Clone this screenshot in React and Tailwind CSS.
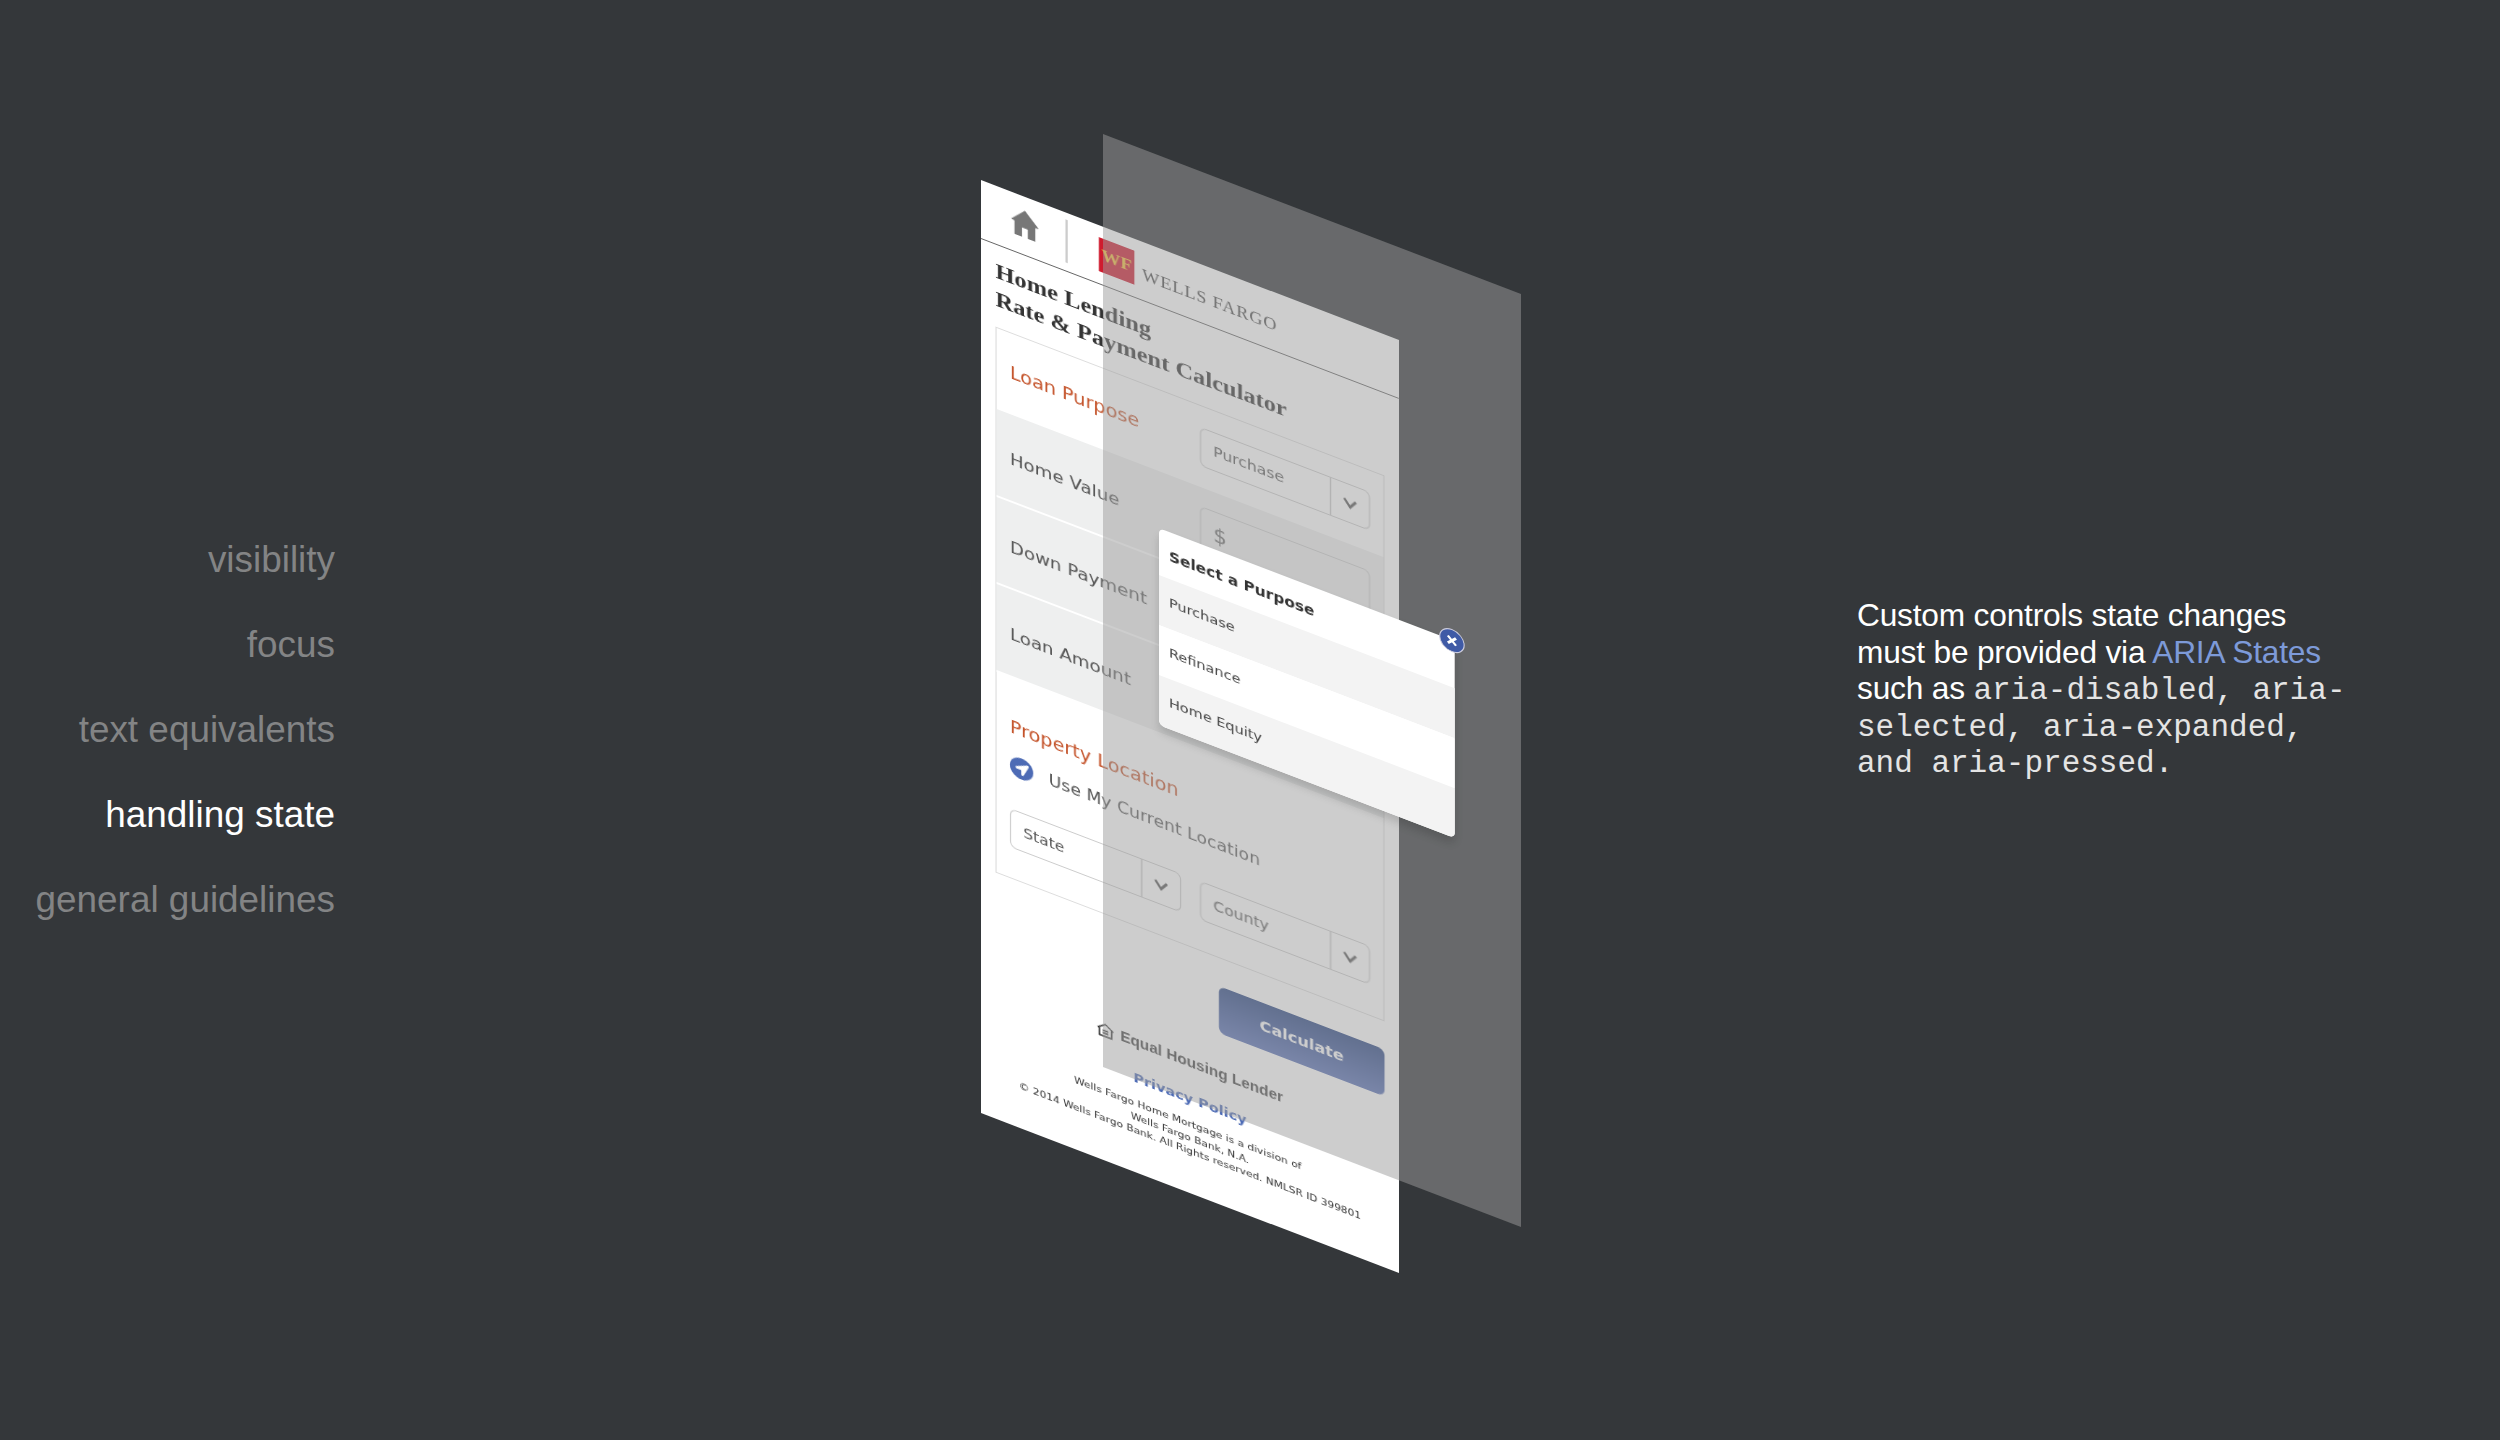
import React from "react";
import { FaLocationArrow } from "react-icons/fa";

const navItems = [
  { label: "visibility" },
  { label: "focus" },
  { label: "text equivalents" },
  { label: "handling state", active: true },
  { label: "general guidelines" },
];

function Chevron() {
  return (
    <svg viewBox="0 0 16 12" className="h-[11px] w-[14px]" fill="none" stroke="#555" strokeWidth="2.6">
      <path d="M2 2l6 8 6-8" />
    </svg>
  );
}

function Select({ label, className }) {
  return (
    <div className={`flex h-[39px] items-stretch rounded-md border border-[#ccc] bg-white ${className}`}>
      <div className="flex-1 pl-[11px] pt-[8px] text-[14px] leading-[20px] text-[#555]">{label}</div>
      <div className="flex w-[35px] items-center justify-center border-l border-[#bbb]">
        <Chevron />
      </div>
    </div>
  );
}

function Row({ label, prefix }) {
  return (
    <div className="flex h-[87.5px] items-start justify-between border-b-2 border-white bg-[#eeefef] pl-[12px] pr-[12px]">
      <div className="pt-[33px] text-[16.4px] leading-[24px] text-[#555]">{label}</div>
      <div className="mt-[19px] h-[46px] w-[153px] rounded-md border border-[#ccc] bg-[#eeefef] pl-[11px] pt-[10px] text-[19px] leading-[24px] text-[#666]">
        {prefix}
      </div>
    </div>
  );
}

function HomeIcon() {
  return (
    <svg viewBox="0 0 24 26" className="h-[29px] w-[25px]" fill="#777">
      <path d="M12 0L24 12.5 21 13V26H14.5V17H9.5V26H3V13L0 12.5Z" />
    </svg>
  );
}

function HousingIcon() {
  return (
    <svg viewBox="0 0 16 14" className="mr-[5px] h-[14px] w-[16px] shrink-0" fill="none" stroke="#333" strokeWidth="1.4">
      <path d="M1 6l7-5 7 5M2.5 5.5V13h11V5.5M5.5 7.5h5M5.5 10h5" />
    </svg>
  );
}

function PhoneScreen() {
  return (
    <div className="absolute left-[21px] top-[180px] h-[933px] w-[376px] origin-top-left bg-white [font-family:'DejaVu_Sans',sans-serif] [transform:matrix(1.1117,0.4255,0,1,0,0)]">
      <div className="flex h-full flex-col blur-[0.5px]">
        <div className="flex h-[59px] shrink-0 items-start border-b-[1.5px] border-[#666]">
          <div className="flex h-[57px] w-[76px] justify-center pl-[2px] pt-[13px]">
            <HomeIcon />
          </div>
          <div className="mt-[7px] h-[43px] w-[2px] bg-[#ccc]" />
          <div className="ml-[28px] mt-[12px] flex h-[34px] w-[32px] items-center justify-center bg-[#cf1b2e] [font-family:'Liberation_Serif',serif] text-[17px] font-bold text-[#f5c33b]">
            WF
          </div>
          <div className="ml-[7px] mt-[24px] [font-family:'Liberation_Serif',serif] text-[16.5px] leading-[18px] tracking-[0.7px] text-[#444]">
            WELLS FARGO
          </div>
        </div>
        <div className="h-[82px] shrink-0 pl-[13px] pt-[12px] [font-family:'Liberation_Serif',serif] text-[22px] font-bold leading-[28px] text-[#333]">
          <div>Home Lending</div>
          <div>Rate &amp; Payment Calculator</div>
        </div>
        <div className="mx-[13px] flex h-[546px] shrink-0 flex-col border border-[#ddd]">
          <div className="flex h-[81px] shrink-0 items-start justify-between pl-[12px] pr-[12px]">
            <div className="pt-[27px] text-[17.3px] leading-[24px] text-[#c4532a]">Loan Purpose</div>
            <Select label="Purchase" className="mt-[21px] w-[153px]" />
          </div>
          <Row label="Home Value" prefix="$" />
          <Row label="Down Payment" />
          <Row label="Loan Amount" />
          <div className="flex-1 pl-[12px] pr-[12px] pt-[37px]">
            <div className="text-[17.3px] leading-[24px] text-[#c4532a]">Property Location</div>
            <div className="mt-[15px] flex h-[24px] items-center">
              <div className="flex h-[21px] w-[21px] items-center justify-center rounded-full bg-[#4d6bb5] text-white">
                <FaLocationArrow className="h-[12px] w-[12px]" />
              </div>
              <div className="ml-[14px] text-[15.5px] leading-[20px] text-[#555]">Use My Current Location</div>
            </div>
            <div className="mt-[31px] flex justify-between">
              <Select label="State" className="w-[154px]" />
              <Select label="County" className="w-[153px]" />
            </div>
          </div>
        </div>
        <div className="mr-[13px] mt-[28px] flex h-[47px] w-[149px] shrink-0 items-center justify-center self-end rounded-md bg-gradient-to-b from-[#294583] to-[#576fb5] text-[14.5px] font-bold text-white">
          Calculate
        </div>
        <div className="mt-[32px] flex items-center justify-center [font-family:'Liberation_Sans',sans-serif] text-[13.8px] font-bold leading-[18px] text-[#444]">
          <HousingIcon />
          Equal Housing Lender
        </div>
        <div className="mt-[18px] text-center text-[13px] font-bold leading-[18px] text-[#4d6bb5]">Privacy Policy</div>
        <div className="mt-[9px] text-center text-[9.5px] leading-[13.5px] text-[#333]">
          <div className="pr-[4px]">Wells Fargo Home Mortgage is a division of</div>
          <div>Wells Fargo Bank, N.A.</div>
          <div>© 2014 Wells Fargo Bank. All Rights reserved. NMLSR ID 399801</div>
        </div>
      </div>
    </div>
  );
}

function PurposeDialog() {
  return (
    <div className="absolute left-[199px] top-[528px] h-[197px] w-[266px] origin-top-left rounded-[5px] bg-white shadow-[0_6px_8px_rgba(0,0,0,0.15)] [font-family:'DejaVu_Sans',sans-serif] [transform:matrix(1.1117,0.4255,0,1,0,0)]">
      <div className="h-[47px] pl-[9px] pt-[14px] text-[13.8px] font-bold leading-[20px] text-[#333] blur-[0.4px]">Select a Purpose</div>
      <div className="h-[50px] bg-[#f3f3f3] pl-[9px] pt-[15px] text-[13px] leading-[18px] text-[#444]">
        <div className="blur-[0.4px]">Purchase</div>
      </div>
      <div className="h-[50px] bg-white pl-[9px] pt-[15px] text-[13px] leading-[18px] text-[#444]">
        <div className="blur-[0.4px]">Refinance</div>
      </div>
      <div className="h-[50px] rounded-b-[5px] bg-[#f3f3f3] pl-[9px] pt-[15px] text-[13px] leading-[18px] text-[#444]">
        <div className="blur-[0.4px]">Home Equity</div>
      </div>
      <div className="absolute -right-[9px] -top-[11px] flex h-[23px] w-[23px] items-center justify-center rounded-full border border-[#ccd] bg-[#3f5aa6]">
        <svg viewBox="0 0 12 12" className="h-[11px] w-[11px]" stroke="white" strokeWidth="2.6">
          <path d="M2 2l8 8M10 2l-8 8" />
        </svg>
      </div>
    </div>
  );
}

export default function App() {
  return (
    <div className="flex h-[1440px] w-full overflow-hidden bg-[#34373a]">
      <div className="flex w-[335px] shrink-0 flex-col items-end gap-[38px] pt-[536px] [font-family:'Liberation_Sans',sans-serif] text-[36.9px] leading-[47px]">
        {navItems.map((item) => (
          <div key={item.label} className={item.active ? "text-white" : "text-[#838485]"}>
            {item.label}
          </div>
        ))}
      </div>

      <div className="relative ml-[625px] w-[560px] shrink-0">
        <PhoneScreen />
        <div className="absolute left-[143px] top-[134px] h-[933px] w-[376px] origin-top-left bg-[rgba(155,155,155,0.5)] [transform:matrix(1.1117,0.4255,0,1,0,0)]" />
        <PurposeDialog />
      </div>

      <div className="ml-[337px] w-[495px] shrink-0 pt-[597px] [font-family:'Liberation_Sans',sans-serif] text-[31.7px] leading-[36.5px] tracking-[-0.2px] text-white">
        Custom controls state changes must be provided via <span className="text-[#7d9ad8]">ARIA States</span> such as{" "}
        <span className="[font-family:'Liberation_Mono',monospace] text-[31px] leading-[30px] tracking-normal text-[#e4e4e4]">
          aria-disabled, aria-selected, aria-expanded, and aria-pressed.
        </span>
      </div>
    </div>
  );
}
